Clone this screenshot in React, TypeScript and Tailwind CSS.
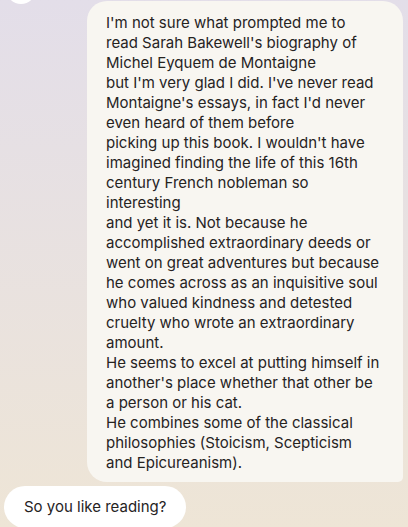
import React from "react";

const lines = [
  "I'm not sure what prompted me to",
  "read Sarah Bakewell's biography of",
  "Michel Eyquem de Montaigne",
  "but I'm very glad I did. I've never read",
  "Montaigne's essays, in fact I'd never",
  "even heard of them before",
  "picking up this book. I wouldn't have",
  "imagined finding the life of this 16th",
  "century French nobleman so",
  "interesting",
  "and yet it is. Not because he",
  "accomplished extraordinary deeds or",
  "went on great adventures but because",
  "he comes across as an inquisitive soul",
  "who valued kindness and detested",
  "cruelty who wrote an extraordinary",
  "amount.",
  "He seems to excel at putting himself in",
  "another's place whether that other be",
  "a person or his cat.",
  "He combines some of the classical",
  "philosophies (Stoicism, Scepticism",
  "and Epicureanism).",
];

export default function App() {
  return (
    <div
      className="relative w-[408px] h-[527px] overflow-hidden bg-gradient-to-b from-[#e3dee9] to-[#eee5d6] text-[#26231f]"
      style={{ fontFamily: "Inter, 'Noto Sans', sans-serif" }}
    >
      <div className="absolute left-[6px] top-[-26px] w-[30px] h-[30px] rounded-full bg-white" />
      <div className="flex flex-col pt-[1px]">
        <div className="ml-[87px] mr-[5px] rounded-[20px] rounded-br-[5px] bg-[#f8f6f1] pl-[19px] pr-[12px] pt-[12px] pb-[9px] text-[15px] leading-[20px]">
          {lines.map((l, i) => (
            <div key={i} className="whitespace-nowrap">
              {l}
            </div>
          ))}
        </div>
        <div className="ml-[4px] mt-[4px] w-fit rounded-[22px] bg-white pl-[20px] pr-[20px] pt-[11px] pb-[11px] text-[15px] leading-[20px] whitespace-nowrap">
          So you like reading?
        </div>
      </div>
    </div>
  );
}
